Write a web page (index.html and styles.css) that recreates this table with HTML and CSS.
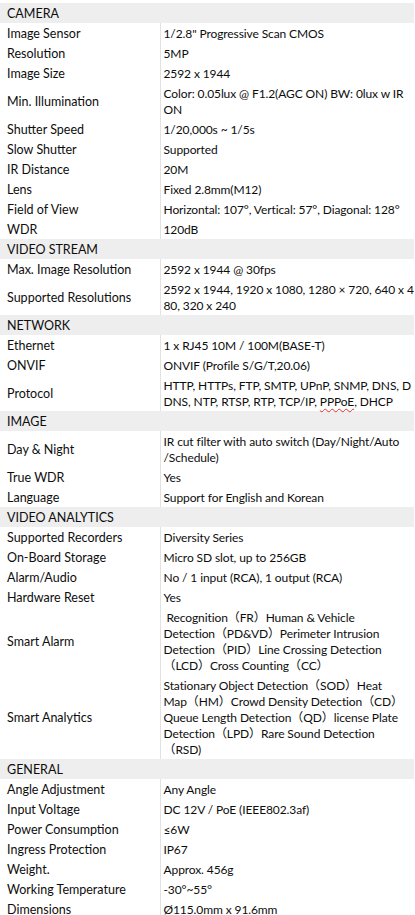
FILE: index.html
```html
<!DOCTYPE html>
<html lang="en">
<head>
    <meta charset="UTF-8">
    <meta name="viewport" content="width=device-width, initial-scale=1.0">
    <title>Camera Specification</title>
    <link rel="stylesheet" href="styles.css">
</head>
<body>

    <table class="spec-table">
        <colgroup>
            <col class="label-col">
            <col class="value-col">
        </colgroup>
        <tr class="section"><td colspan="2">CAMERA</td></tr>
        <tr><td class="label">Image Sensor</td><td class="value">1/2.8" Progressive Scan CMOS</td></tr>
        <tr><td class="label">Resolution</td><td class="value">5MP</td></tr>
        <tr><td class="label">Image Size</td><td class="value">2592 x 1944</td></tr>
        <tr><td class="label">Min. Illumination</td><td class="value">Color: 0.05lux @ F1.2(AGC ON) BW: 0lux w IR<br>ON</td></tr>
        <tr><td class="label">Shutter Speed</td><td class="value">1/20,000s ~ 1/5s</td></tr>
        <tr><td class="label">Slow Shutter</td><td class="value">Supported</td></tr>
        <tr><td class="label">IR Distance</td><td class="value">20M</td></tr>
        <tr><td class="label">Lens</td><td class="value">Fixed 2.8mm(M12)</td></tr>
        <tr><td class="label">Field of View</td><td class="value">Horizontal: 107°, Vertical: 57°, Diagonal: 128°</td></tr>
        <tr><td class="label">WDR</td><td class="value">120dB</td></tr>

        <tr class="section"><td colspan="2">VIDEO STREAM</td></tr>
        <tr><td class="label">Max. Image Resolution</td><td class="value">2592 x 1944 @ 30fps</td></tr>
        <tr><td class="label">Supported Resolutions</td><td class="value">2592 x 1944, 1920 x 1080, 1280 × 720, 640 x 4<br>80, 320 x 240</td></tr>

        <tr class="section"><td colspan="2">NETWORK</td></tr>
        <tr><td class="label">Ethernet</td><td class="value">1 x RJ45 10M / 100M(BASE-T)</td></tr>
        <tr><td class="label">ONVIF</td><td class="value">ONVIF (Profile S/G/T,20.06)</td></tr>
        <tr><td class="label">Protocol</td><td class="value">HTTP, HTTPs, FTP, SMTP, UPnP, SNMP, DNS, D<br>DNS, NTP, RTSP, RTP, TCP/IP, <span class="typo">PPPoE</span>, DHCP</td></tr>

        <tr class="section"><td colspan="2">IMAGE</td></tr>
        <tr><td class="label">Day &amp; Night</td><td class="value">IR cut filter with auto switch (Day/Night/Auto<br>/Schedule)</td></tr>
        <tr><td class="label">True WDR</td><td class="value">Yes</td></tr>
        <tr><td class="label">Language</td><td class="value">Support for English and Korean</td></tr>

        <tr class="section"><td colspan="2">VIDEO ANALYTICS</td></tr>
        <tr><td class="label">Supported Recorders</td><td class="value">Diversity Series</td></tr>
        <tr><td class="label">On-Board Storage</td><td class="value">Micro SD slot, up to 256GB</td></tr>
        <tr><td class="label">Alarm/Audio</td><td class="value">No / 1 input (RCA), 1 output (RCA)</td></tr>
        <tr><td class="label">Hardware Reset</td><td class="value">Yes</td></tr>
        <tr><td class="label">Smart Alarm</td><td class="value">&nbsp;Recognition（FR）Human &amp; Vehicle<br>Detection（PD&amp;VD）Perimeter Intrusion<br>Detection（PID）Line Crossing Detection<br>（LCD）Cross Counting（CC）</td></tr>
        <tr><td class="label">Smart Analytics</td><td class="value">Stationary Object Detection（SOD）Heat<br>Map（HM）Crowd Density Detection（CD）<br>Queue Length Detection（QD）license Plate<br>Detection（LPD）Rare Sound Detection<br>（RSD)</td></tr>

        <tr class="section"><td colspan="2">GENERAL</td></tr>
        <tr><td class="label">Angle Adjustment</td><td class="value">Any Angle</td></tr>
        <tr><td class="label">Input Voltage</td><td class="value">DC 12V / PoE (IEEE802.3af)</td></tr>
        <tr><td class="label">Power Consumption</td><td class="value">≤6W</td></tr>
        <tr><td class="label">Ingress Protection</td><td class="value">IP67</td></tr>
        <tr><td class="label">Weight.</td><td class="value">Approx. 456g</td></tr>
        <tr><td class="label">Working Temperature</td><td class="value">-30°~55°</td></tr>
        <tr><td class="label">Dimensions</td><td class="value">Ø115.0mm x 91.6mm</td></tr>
    </table>

</body>
</html>
```

FILE: styles.css
```css
body {
    font-family: Lato, "Noto Sans CJK SC", sans-serif;
    font-size: 12.5px;
    color: #0d0d0d;
    background-color: #ffffff;
    margin: 0;
    padding: 3px 0 0 0;
}
.spec-table {
    width: 414px;
    table-layout: fixed;
    border-collapse: collapse;
    line-height: 16px;
}
.label-col {
    width: 160px;
}
.spec-table td {
    padding: 3px 0 1px 0;
    white-space: nowrap;
    overflow: visible;
}
.section td {
    background-color: #eeeeee;
    padding-left: 7px;
}
.label {
    padding-left: 7px !important;
    border-right: 1px solid #e2e2e2;
    vertical-align: middle;
}
.value {
    padding-left: 3px !important;
    vertical-align: top;
    font-size: 12px;
    letter-spacing: -0.1px;
}
.typo {
    text-decoration: underline wavy #e03030;
    text-decoration-thickness: 1px;
    text-underline-offset: 2px;
}
```
